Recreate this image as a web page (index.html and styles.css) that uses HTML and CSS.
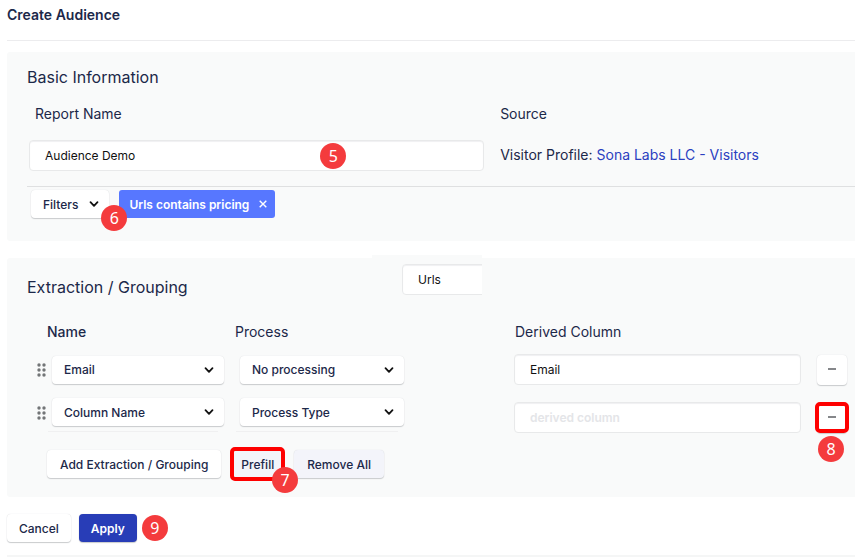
FILE: index.html
```
<!DOCTYPE html>
<html lang="en">
<head>
    <meta charset="UTF-8">
    <meta name="viewport" content="width=device-width, initial-scale=1.0">
    <title>Create Audience</title>
    <link rel="stylesheet" href="styles.css">
</head>
<body>
    <header class="page-header">
        <h1>Create Audience</h1>
    </header>

    <form class="audience-form">
        <section class="panel basic">
            <h2>Basic Information</h2>
            <div class="basic-grid">
                <div class="field">
                    <label class="label" for="reportName">Report Name</label>
                    <div class="input-wrap">
                        <input type="text" id="reportName" value="Audience Demo">
                        <span class="badge badge-report">5</span>
                    </div>
                </div>
                <div class="source">
                    <div class="source-title">Source</div>
                    <div class="source-value">Visitor Profile: <a href="#">Sona Labs LLC - Visitors</a></div>
                </div>
            </div>
            <div class="filters">
                <button type="button" class="btn btn-filters">
                    Filters
                    <svg class="chevron" viewBox="0 0 10 10"><path d="M1.5 3.2 5 6.8 8.5 3.2"/></svg>
                    <span class="badge badge-filters">6</span>
                </button>
                <button type="button" class="chip">
                    Urls contains pricing
                    <svg class="close" viewBox="0 0 8 8"><path d="M.7.7 7.3 7.3M7.3.7.7 7.3"/></svg>
                </button>
            </div>
        </section>

        <section class="panel extraction">
            <div class="extraction-head">
                <h2>Extraction / Grouping</h2>
                <div class="urls-box">
                    <input type="text" value="Urls" aria-label="Urls">
                </div>
            </div>

            <div class="columns-head">
                <span class="strong">Name</span>
                <span>Process</span>
                <span>Derived Column</span>
            </div>

            <div class="rows">
                <div class="row">
                    <svg class="handle" viewBox="0 0 9 14"><circle cx="2" cy="2" r="1.7"/><circle cx="7" cy="2" r="1.7"/><circle cx="2" cy="7" r="1.7"/><circle cx="7" cy="7" r="1.7"/><circle cx="2" cy="12" r="1.7"/><circle cx="7" cy="12" r="1.7"/></svg>
                    <div class="name-cell">
                        <div class="select">
                            <select aria-label="Name"><option>Email</option></select>
                            <svg class="chevron" viewBox="0 0 10 10"><path d="M1.5 3.2 5 6.8 8.5 3.2"/></svg>
                        </div>
                    </div>
                    <div class="process-cell">
                        <div class="select">
                            <select aria-label="Process"><option>No processing</option></select>
                            <svg class="chevron" viewBox="0 0 10 10"><path d="M1.5 3.2 5 6.8 8.5 3.2"/></svg>
                        </div>
                    </div>
                    <div class="derived-cell">
                        <input type="text" value="Email" aria-label="Derived column">
                    </div>
                    <button type="button" class="btn btn-minus" aria-label="Remove row"><span class="minus"></span></button>
                </div>

                <div class="row row-new">
                    <svg class="handle" viewBox="0 0 9 14"><circle cx="2" cy="2" r="1.7"/><circle cx="7" cy="2" r="1.7"/><circle cx="2" cy="7" r="1.7"/><circle cx="7" cy="7" r="1.7"/><circle cx="2" cy="12" r="1.7"/><circle cx="7" cy="12" r="1.7"/></svg>
                    <div class="name-cell">
                        <div class="select">
                            <select aria-label="Name"><option>Column Name</option></select>
                            <svg class="chevron" viewBox="0 0 10 10"><path d="M1.5 3.2 5 6.8 8.5 3.2"/></svg>
                        </div>
                    </div>
                    <div class="process-cell">
                        <div class="select">
                            <select aria-label="Process"><option>Process Type</option></select>
                            <svg class="chevron" viewBox="0 0 10 10"><path d="M1.5 3.2 5 6.8 8.5 3.2"/></svg>
                        </div>
                    </div>
                    <div class="derived-cell">
                        <input type="text" placeholder="derived column" aria-label="Derived column">
                    </div>
                    <button type="button" class="btn btn-minus marked" aria-label="Remove row"><span class="minus"></span><span class="badge badge-remove">8</span></button>
                </div>
            </div>

            <div class="actions">
                <button type="button" class="btn btn-add">Add Extraction / Grouping</button>
                <button type="button" class="btn btn-soft btn-prefill marked">Prefill<span class="badge badge-prefill">7</span></button>
                <button type="button" class="btn btn-soft btn-remove-all">Remove All</button>
            </div>
        </section>

        <div class="form-footer">
            <button type="button" class="btn">Cancel</button>
            <button type="submit" class="btn btn-primary">Apply</button>
            <span class="badge">9</span>
        </div>
    </form>
</body>
</html>
```
FILE: styles.css
```
* {
    box-sizing: border-box;
}
body {
    margin: 0;
    padding-left: 7px;
    background: #fff;
    color: #1c2849;
    font-family: Inter, "Liberation Sans", sans-serif;
    font-size: 14px;
    line-height: 20px;
    overflow-x: hidden;
}
h1, h2 {
    margin: 0;
}
h1 {
    font-size: 14px;
    font-weight: 600;
    line-height: 20px;
}
h2 {
    font-size: 16px;
    font-weight: 400;
    line-height: 20px;
}
a {
    color: #2b3fc0;
    text-decoration: none;
}
.page-header {
    padding: 5px 0 15px;
    border-bottom: 1px solid #ececee;
    margin-bottom: 11px;
}

/* panels */
.panel {
    background: #f9fafa;
    border-radius: 3px 0 0 3px;
    padding-left: 20px;
}
.basic {
    padding-top: 15px;
    padding-bottom: 23px;
    margin-bottom: 17px;
}
.extraction {
    position: relative;
    padding-top: 6px;
    padding-bottom: 19px;
}
/* tab that sticks out above the panel */
.extraction::before {
    content: "";
    position: absolute;
    top: -3px;
    left: 43%;
    width: 110px;
    height: 3px;
    background: #f9fafa;
}

/* inputs */
input {
    width: 100%;
    height: 31px;
    padding: 0 15px;
    border: 1px solid #e8e9ea;
    border-radius: 4px;
    background: #fff;
    box-shadow: inset 0 1px 1px #f0f0f2;
    color: #111;
    font-family: inherit;
    font-size: 12px;
}
input::placeholder {
    color: #e4e5e8;
    font-weight: 600;
    opacity: 1;
}
.basic-grid {
    display: grid;
    grid-template-columns: 4fr 3fr;
    padding-top: 17px;
    padding-bottom: 15px;
}
.field {
    padding: 0 16px 0 2px;
}
.label {
    display: block;
    padding-left: 6px;
    margin-bottom: 16px;
}
.input-wrap {
    position: relative;
}
.source-title {
    margin-bottom: 21px;
}

/* filters */
.filters {
    display: flex;
    gap: 10px;
    padding: 3px 4px 0;
    border-top: 1px solid #dfe0e1;
}
.btn {
    position: relative;
    display: inline-flex;
    align-items: center;
    justify-content: center;
    height: 28px;
    padding: 0 12px;
    border: none;
    border-radius: 4px;
    background: #fff;
    box-shadow: 0 1px 1px #c9cbcd, 0 0 1px #d5d7d9;
    color: #1c2849;
    font-family: inherit;
    font-size: 12px;
    font-weight: 500;
    white-space: nowrap;
    cursor: pointer;
}
.btn-filters {
    gap: 11px;
    padding-right: 10px;
}
.chevron {
    width: 10px;
    height: 10px;
    fill: none;
    stroke: #111;
    stroke-width: 1.8;
    stroke-linecap: round;
    stroke-linejoin: round;
}
.chip {
    display: inline-flex;
    align-items: center;
    gap: 10px;
    height: 28px;
    padding: 0 8px 0 10px;
    border: none;
    border-radius: 3px;
    background: #5777ff;
    color: #fff;
    font-family: inherit;
    font-size: 12px;
    font-weight: 600;
}
.close {
    width: 8px;
    height: 8px;
    fill: none;
    stroke: #fff;
    stroke-width: 1.4;
}

/* extraction */
.extraction-head {
    display: grid;
    grid-template-columns: 375fr 453fr;
    align-items: start;
}
.extraction-head h2 {
    padding-top: 13px;
}
.urls-box {
    width: 80px;
    overflow: hidden;
}
.urls-box input {
    width: 120px;
}
.columns-head {
    display: grid;
    grid-template-columns: 188fr 280fr 340fr;
    padding: 25px 0 12px 20px;
}
.strong {
    font-weight: 500;
}
.rows {
    display: grid;
    gap: 13px;
    padding: 0 8px 0 10px;
}
.row {
    display: grid;
    grid-template-columns: 15px 188fr 274fr 303fr 30px;
    align-items: center;
}
.row-new {
    height: 35px;
}
.handle {
    width: 9px;
    height: 14px;
    fill: #737577;
}
.name-cell, .derived-cell {
    padding-right: 16px;
}
.process-cell {
    padding-right: 110px;
}
.select {
    position: relative;
}
.select select {
    display: block;
    width: 100%;
    height: 28px;
    padding: 0 28px 0 12px;
    border: none;
    border-radius: 4px;
    background: #fff;
    box-shadow: 0 1px 1px #c9cbcd, 0 0 1px #d5d7d9;
    color: #1c2849;
    font-family: inherit;
    font-size: 12px;
    font-weight: 500;
    appearance: none;
}
.select .chevron {
    position: absolute;
    top: 9px;
    right: 10px;
    pointer-events: none;
}
.row-new .name-cell, .row-new .process-cell, .row-new .handle {
    align-self: start;
}
.row-new .handle {
    margin-top: 8px;
}
.row-new .derived-cell, .row-new .btn-minus {
    align-self: end;
}
.row-new .select::after {
    content: "";
    position: absolute;
    top: 33px;
    left: -4px;
    right: 6px;
    height: 1px;
    background: #f0f0f1;
}
.btn-minus {
    width: 30px;
    height: 30px;
    padding: 0 0 2px;
}
.minus {
    width: 8px;
    height: 2px;
    background: #85878a;
}
.actions {
    display: flex;
    align-items: center;
    gap: 10px;
    padding: 17px 0 0 20px;
}
.btn-add, .btn-remove-all {
    padding: 0 13px;
}
.btn-soft {
    background: #f3f4fa;
}
.btn-prefill {
    margin: 0 1px;
    padding: 0 9px;
}
.marked::after {
    content: "";
    position: absolute;
    inset: -3px -2px;
    border: 4px solid #fe0000;
    border-radius: 5px;
}
.btn-minus.marked::after {
    inset: -1px -2px 0;
}

/* numbered badges */
.badge {
    display: flex;
    align-items: center;
    justify-content: center;
    width: 26px;
    height: 26px;
    border-radius: 50%;
    background: #f43b3d;
    color: #fff;
    font-family: "Noto Sans", sans-serif;
    font-size: 16px;
    font-weight: 400;
    line-height: 26px;
}
.badge-report, .badge-filters, .badge-prefill, .badge-remove {
    position: absolute;
    z-index: 1;
}
.badge-report {
    top: 3px;
    left: 64%;
}
.badge-filters {
    right: -18px;
    bottom: -13px;
}
.badge-prefill {
    right: -15px;
    bottom: -15px;
}
.badge-remove {
    top: 33px;
    left: 1px;
}

.form-footer {
    display: flex;
    align-items: center;
    gap: 8px;
    padding: 17px 0 13px;
    border-bottom: 2px solid #f5f6f6;
}
.btn-primary {
    background: #283db7;
    color: #fff;
    font-weight: 600;
}
.form-footer .badge {
    margin-left: -3px;
}
```
